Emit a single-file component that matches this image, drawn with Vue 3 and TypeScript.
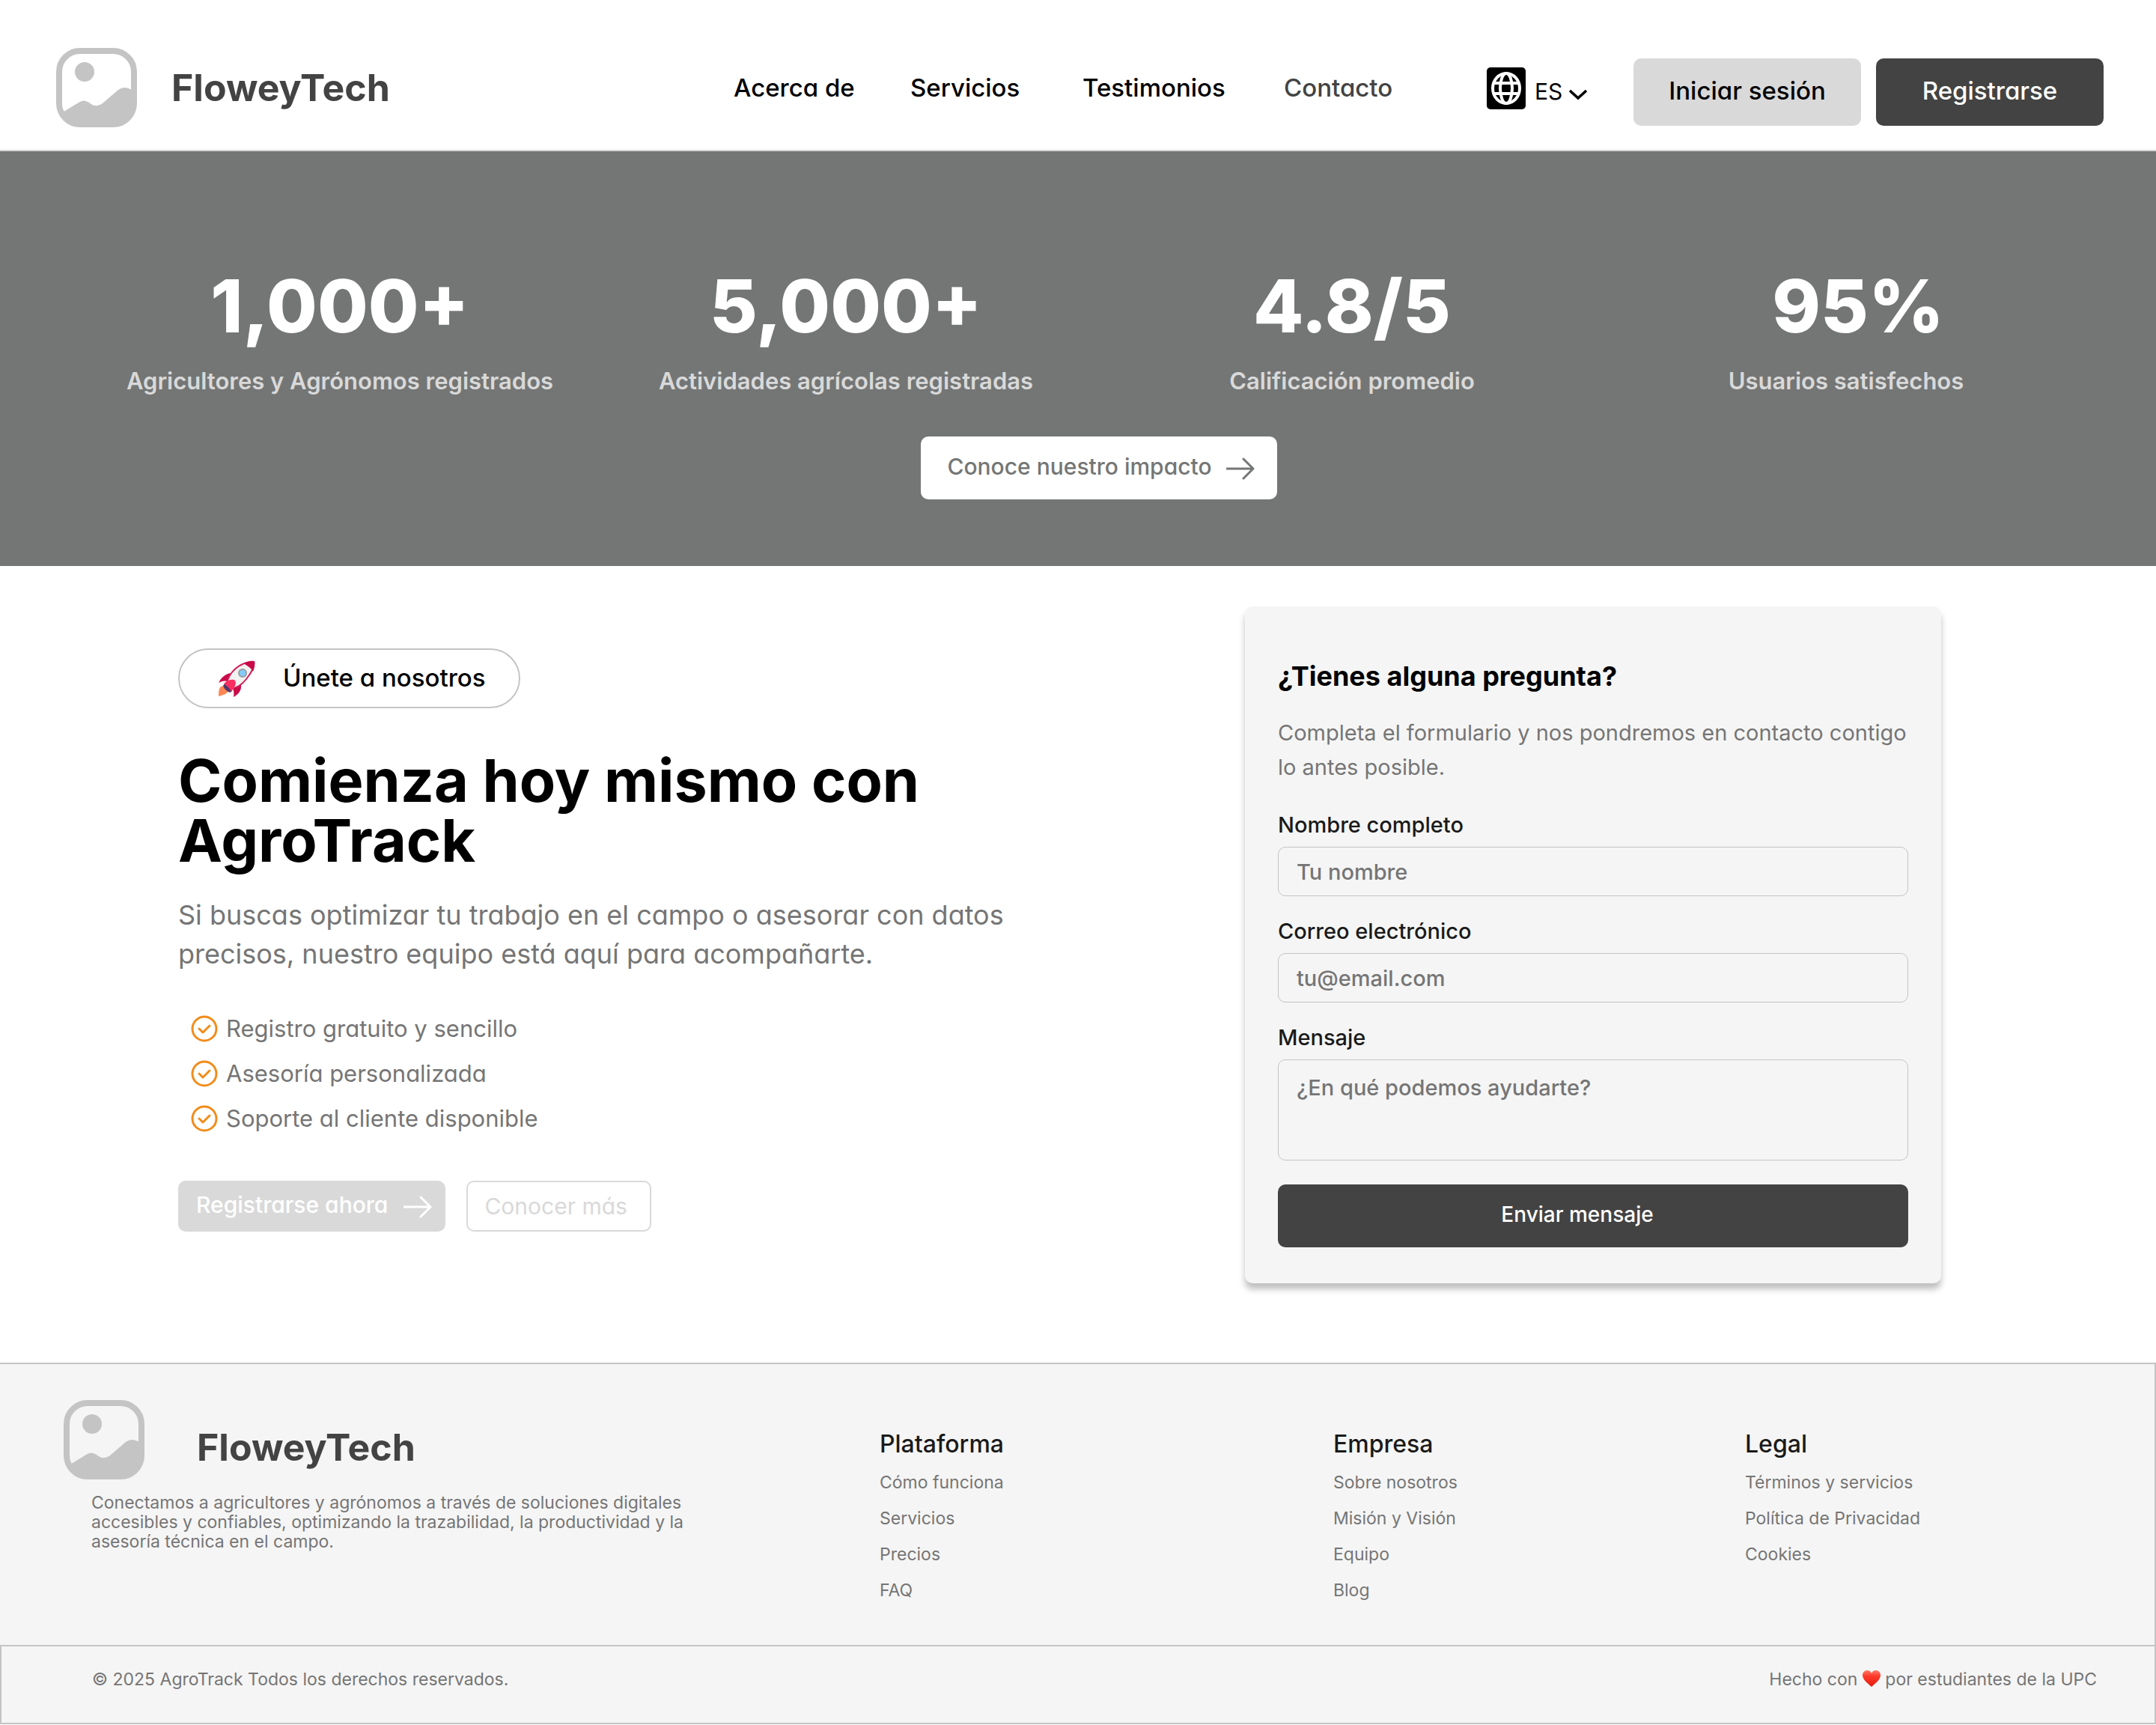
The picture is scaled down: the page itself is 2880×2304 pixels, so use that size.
<script setup lang="ts">
import { ref } from 'vue'

interface Stat {
  value: string
  label: string
}

interface LinkGroup {
  title: string
  links: string[]
}

const navLinks = ['Acerca de', 'Servicios', 'Testimonios', 'Contacto']

const stats: Stat[] = [
  { value: '1,000+', label: 'Agricultores y Agrónomos registrados' },
  { value: '5,000+', label: 'Actividades agrícolas registradas' },
  { value: '4.8/5', label: 'Calificación promedio' },
  { value: '95%', label: 'Usuarios satisfechos' },
]

const benefits = ['Registro gratuito y sencillo', 'Asesoría personalizada', 'Soporte al cliente disponible']

const groups: LinkGroup[] = [
  { title: 'Plataforma', links: ['Cómo funciona', 'Servicios', 'Precios', 'FAQ'] },
  { title: 'Empresa', links: ['Sobre nosotros', 'Misión y Visión', 'Equipo', 'Blog'] },
  { title: 'Legal', links: ['Términos y servicios', 'Política de Privacidad', 'Cookies'] },
]

const language = ref('ES')
const fullName = ref('')
const email = ref('')
const message = ref('')
</script>

<template>
  <div class="page">
    <header class="header round">
      <a class="brand" href="#">
        <svg class="brand-mark" viewBox="0 0 108 106" aria-hidden="true">
          <rect x="4" y="4" width="100" height="98" rx="28" fill="none" stroke="#c4c4c4" stroke-width="8" />
          <circle cx="38" cy="32" r="13" fill="#c4c4c4" />
          <path d="M7 87 L30 73 Q37 68 44 73 Q53 81 62 74 L83 56 Q91 50 101 56 L104 60 L104 74 Q104 102 76 102 L32 102 Q14 102 7 87Z" fill="#c4c4c4" />
        </svg>
        <span class="brand-name">FloweyTech</span>
      </a>
      <nav class="nav" aria-label="Principal">
        <a v-for="link in navLinks" :key="link" href="#" :class="{ active: link === 'Contacto' }">{{ link }}</a>
      </nav>
      <div class="actions">
        <div class="language">
          <svg class="globe" viewBox="0 0 52 56" aria-hidden="true">
            <rect width="52" height="56" rx="5" />
            <g fill="none" stroke="#fff" stroke-width="4">
              <ellipse cx="26" cy="28" rx="18" ry="20" />
              <ellipse cx="26" cy="28" rx="8" ry="20" />
              <path d="M9 21h34M9 35h34" />
            </g>
          </svg>
          <select v-model="language" aria-label="Idioma">
            <option>ES</option>
            <option>EN</option>
          </select>
          <svg class="chevron" viewBox="0 0 26 16" aria-hidden="true">
            <path d="M2 3l11 10L24 3" fill="none" stroke="#000" stroke-width="3.600" />
          </svg>
        </div>
        <button type="button" class="account light">Iniciar sesión</button>
        <button type="button" class="account dark">Registrarse</button>
      </div>
    </header>

    <section class="hero">
      <dl class="stats">
        <div v-for="stat in stats" :key="stat.value" class="stat">
          <dt>{{ stat.label }}</dt>
          <dd>{{ stat.value }}</dd>
        </div>
      </dl>
      <button type="button" class="impact round">
        Conoce nuestro impacto
        <svg class="arrow" viewBox="0 0 38 30" aria-hidden="true">
          <path d="M1 15h35M23 2l13 13-13 13" />
        </svg>
      </button>
    </section>

    <main class="main">
      <section class="intro round">
        <p class="pill">
          <svg class="rocket" viewBox="0 0 50 50" aria-hidden="true">
            <path d="M3 36 C7 32 14 36 14 40 C14 44 8 46 1 48 C1 44 1 39 3 36Z" fill="#ff8754" />
            <path d="M18 17 C9 18 4 24 1 30 C6 27 10 27 14 28Z" fill="#ca0b4a" />
            <path d="M31 32 C32 40 28 45 21 49 C22 44 21 41 20 36Z" fill="#ca0b4a" />
            <path d="M48 2 C36 2 26 7 18 17 C14 23 12 28 12 33 L17 38 C24 37 32 33 38 25 C46 15 49 7 48 2Z" fill="#f2f2f2" stroke="#d51c56" stroke-width="2" stroke-linejoin="round" />
            <path d="M49 1 C43 0 38 2 34 4 C38 6 40 8 43 10 C45 12 46 14 47 15 C49 10 50 5 49 1Z" fill="#ca0b4a" />
            <circle cx="33" cy="17" r="5" fill="#83cbff" stroke="#9b9b9b" stroke-width="2" />
            <path d="M9 31 L19 41 L16 43 Q9 40 7 34Z" fill="#50386b" />
            <path d="M8 31 C12 27 17 25 22 26 C25 29 24 33 22 36 L18 42 L15 37 L11 33Z" fill="#f92f60" />
          </svg>
          Únete a nosotros
        </p>
        <h1>Comienza hoy mismo con AgroTrack</h1>
        <p class="lead">
          Si buscas optimizar tu trabajo en el campo o asesorar con datos precisos, nuestro equipo está aquí para
          acompañarte.
        </p>
        <ul class="benefits">
          <li v-for="benefit in benefits" :key="benefit">
            <svg class="check" viewBox="0 0 36 36" aria-hidden="true">
              <circle cx="18" cy="18" r="16" />
              <path d="M11 18l5 5 9-9" />
            </svg>
            {{ benefit }}
          </li>
        </ul>
        <div class="cta">
          <button type="button" class="cta-fill">
            Registrarse ahora
            <svg class="arrow" viewBox="0 0 38 30" aria-hidden="true">
              <path d="M1 15h35M23 2l13 13-13 13" />
            </svg>
          </button>
          <button type="button" class="cta-line">Conocer más</button>
        </div>
      </section>

      <form class="card" @submit.prevent>
        <h2>¿Tienes alguna pregunta?</h2>
        <p class="hint">Completa el formulario y nos pondremos en contacto contigo lo antes posible.</p>
        <div class="fields">
          <div class="field">
            <label for="full-name">Nombre completo</label>
            <input id="full-name" v-model="fullName" type="text" placeholder="Tu nombre" />
          </div>
          <div class="field">
            <label for="email">Correo electrónico</label>
            <input id="email" v-model="email" type="email" placeholder="tu@email.com" />
          </div>
          <div class="field">
            <label for="message">Mensaje</label>
            <textarea id="message" v-model="message" placeholder="¿En qué podemos ayudarte?"></textarea>
          </div>
        </div>
        <button type="submit" class="send">Enviar mensaje</button>
      </form>
    </main>

    <footer class="footer">
      <div class="footer-top">
        <div class="about">
          <a class="brand" href="#">
            <svg class="brand-mark" viewBox="0 0 108 106" aria-hidden="true">
              <rect x="4" y="4" width="100" height="98" rx="28" fill="none" stroke="#c4c4c4" stroke-width="8" />
              <circle cx="38" cy="32" r="13" fill="#c4c4c4" />
              <path d="M7 87 L30 73 Q37 68 44 73 Q53 81 62 74 L83 56 Q91 50 101 56 L104 60 L104 74 Q104 102 76 102 L32 102 Q14 102 7 87Z" fill="#c4c4c4" />
            </svg>
            <span class="brand-name round">FloweyTech</span>
          </a>
          <p>
            Conectamos a agricultores y agrónomos a través de soluciones digitales accesibles y confiables, optimizando
            la trazabilidad, la productividad y la asesoría técnica en el campo.
          </p>
        </div>
        <nav v-for="group in groups" :key="group.title" class="group" :aria-label="group.title">
          <h3>{{ group.title }}</h3>
          <a v-for="link in group.links" :key="link" href="#">{{ link }}</a>
        </nav>
      </div>
      <div class="footer-bottom">
        <span>© 2025 AgroTrack Todos los derechos reservados.</span>
        <span>
          Hecho con
          <svg class="heart" viewBox="0 0 24 22" role="img" aria-label="amor">
            <defs>
              <linearGradient id="heart-fill" x1="0" y1="0" x2="0" y2="1">
                <stop offset="0" stop-color="#ff7a66" />
                <stop offset="0.35" stop-color="#ff3b2b" />
                <stop offset="1" stop-color="#e01b0c" />
              </linearGradient>
            </defs>
            <path d="M12 22C8 18 0 13 0 6.500C0 2.500 3 0 6.500 0C9 0 11 1.500 12 4C13 1.500 15 0 17.500 0C21 0 24 2.500 24 6.500C24 13 16 18 12 22Z" fill="url(#heart-fill)" />
          </svg>
          por estudiantes de la UPC
        </span>
      </div>
    </footer>
  </div>
</template>

<style>
body {
  margin: 0;
  background: #fff;
}
</style>

<style scoped>
.page {
  font-family: Inter, "Liberation Sans", sans-serif;
  color: #000;
}

.page *,
.page *::before {
  box-sizing: border-box;
}

/* Single-storey "a" for the geometric headings and controls */
.round {
  font-feature-settings: "cv11" 1;
}

h1,
h2,
h3,
p,
ul,
dl,
dd {
  margin: 0;
  padding: 0;
}

a {
  color: inherit;
  text-decoration: none;
}

button,
input,
textarea,
select {
  font: inherit;
  font-feature-settings: inherit;
  color: inherit;
  margin: 0;
}

button {
  border: 0;
  padding: 0;
  cursor: pointer;
}

svg {
  display: block;
  flex: none;
}

.header {
  display: flex;
  align-items: center;
  padding: 64px 70px 30px 75px;
  border-bottom: 2px solid #d9d9d9;
}

.brand {
  display: flex;
  align-items: center;
  gap: 46px;
}

.brand-mark {
  width: 108px;
  height: 106px;
}

.brand-name {
  font-size: 50px;
  line-height: 60px;
  font-weight: 700;
  color: #434343;
}

.nav {
  display: grid;
  grid-template-columns: 236px 230px 269px 271px;
  margin-left: auto;
  font-size: 33px;
  line-height: 40px;
  font-weight: 500;
}

.nav .active {
  color: #434343;
}

.actions {
  display: flex;
  align-items: center;
  gap: 20px;
  padding-top: 12px;
}

.language {
  display: flex;
  align-items: center;
  position: relative;
  width: 176px;
}

.globe {
  width: 52px;
  height: 56px;
  margin-bottom: 10px;
}

.language select {
  appearance: none;
  width: 88px;
  padding: 0 0 2px 12px;
  border: 0;
  background: transparent;
  font-size: 30px;
  line-height: 40px;
}

.chevron {
  position: absolute;
  left: 109px;
  top: 28px;
  width: 26px;
  height: 16px;
  pointer-events: none;
}

.account {
  width: 304px;
  height: 90px;
  padding-bottom: 4px;
  border-radius: 10px;
  font-size: 33px;
  font-weight: 500;
}

.light {
  background: #d9d9d9;
}

.dark {
  background: #434343;
  color: #fff;
}

.hero {
  padding: 158px 60px 89px 116px;
  background: #747675;
  text-align: center;
}

.stats {
  display: grid;
  grid-template-columns: repeat(4, 1fr);
}

.stat {
  display: flex;
  flex-direction: column-reverse;
  gap: 31px;
}

.stat dd {
  font-size: 98px;
  line-height: 98px;
  font-weight: 800;
  color: #fff;
}

.stat dt {
  font-size: 31px;
  line-height: 40px;
  font-weight: 600;
  color: #d9d9d9;
}

.stat:last-child dt {
  padding-right: 32px;
}

.impact {
  display: inline-flex;
  align-items: center;
  gap: 19px;
  height: 84px;
  margin-top: 54px;
  padding: 0 30px 4px 35px;
  border-radius: 10px;
  background: #fff;
  color: #747675;
  font-size: 30px;
  font-weight: 500;
  vertical-align: top;
}

.arrow {
  width: 38px;
  height: 30px;
  margin-top: 6px;
  fill: none;
  stroke: currentColor;
  stroke-width: 3;
  stroke-linecap: round;
  stroke-linejoin: round;
}

.main {
  display: flex;
  justify-content: space-between;
  align-items: flex-start;
  gap: 48px;
  padding: 54px 287px 106px 238px;
}

.intro {
  flex: 0 1 1140px;
  padding-top: 56px;
}

.pill {
  display: inline-flex;
  align-items: center;
  gap: 37px;
  height: 80px;
  padding: 0 44px 2px 51px;
  border: 2px solid #c4c4c4;
  border-radius: 40px;
  font-size: 33px;
  font-weight: 500;
  vertical-align: top;
}

.rocket {
  width: 50px;
  height: 50px;
  margin-top: 4px;
}

h1 {
  margin-top: 56px;
  font-size: 79px;
  line-height: 80px;
  font-weight: 700;
  font-feature-settings: normal;
}

.lead {
  margin-top: 34px;
  font-size: 36px;
  line-height: 52px;
  color: #757575;
}

.benefits {
  margin-top: 44px;
  padding-left: 17px;
  list-style: none;
  font-size: 31px;
  line-height: 60px;
  color: #757575;
}

.benefits li {
  display: flex;
  align-items: center;
  gap: 11px;
}

.check {
  width: 36px;
  height: 36px;
  fill: none;
  stroke: #f28c1a;
  stroke-width: 3;
  stroke-linecap: round;
  stroke-linejoin: round;
}

.cta {
  display: flex;
  gap: 28px;
  margin-top: 53px;
  font-size: 30px;
}

.cta button {
  display: flex;
  align-items: center;
  height: 68px;
  border-radius: 10px;
}

.cta .cta-fill {
  gap: 21px;
  padding: 0 18px 4px 24px;
  background: #d9d9d9;
  color: #fff;
  font-weight: 500;
}

.cta .cta-line {
  padding: 0 30px 0 22px;
  border: 2px solid #d9d9d9;
  background: #fff;
  color: #d9d9d9;
}

.card {
  flex: 0 1 930px;
  padding: 71px 44px 48px;
  border-radius: 10px;
  background: #f5f5f5;
  box-shadow: 0 8px 8px rgba(0, 0, 0, 0.25);
}

h2 {
  font-size: 36px;
  line-height: 44px;
  font-weight: 700;
}

.hint {
  margin-top: 31px;
  margin-right: -16px;
  font-size: 29px;
  line-height: 46px;
  color: #757575;
}

.fields {
  display: flex;
  flex-direction: column;
  gap: 29px;
  margin-top: 36px;
  font-size: 29px;
  line-height: 36px;
  font-weight: 500;
}

.field {
  display: flex;
  flex-direction: column;
  gap: 11px;
}

.field label {
  color: #1a1a1a;
}

.field input,
.field textarea {
  width: 100%;
  height: 66px;
  padding: 0 24px;
  border: 1px solid #c4c4c4;
  border-radius: 10px;
  background: transparent;
  outline: 0;
}

.field textarea {
  display: block;
  height: 135px;
  padding: 19px 24px;
  resize: none;
}

.field ::placeholder {
  color: #757575;
  opacity: 1;
}

.send {
  width: 100%;
  height: 84px;
  margin-top: 32px;
  padding: 0 42px 4px 0;
  border-radius: 10px;
  background: #434343;
  color: #fff;
  font-size: 28px;
  font-weight: 500;
}

.footer {
  border-top: 2px solid #c4c4c4;
  background: #f5f5f5;
  color: #757575;
  font-size: 23px;
}

.footer-top {
  display: grid;
  grid-template-columns: 1090fr 606fr 550fr 547fr;
  padding: 48px 0 49px 85px;
  border-right: 2px solid #c4c4c4;
}

.about .brand {
  gap: 70px;
}

.about .brand-name {
  padding-top: 20px;
}

.about p {
  max-width: 860px;
  margin-top: 18px;
  padding-left: 37px;
  line-height: 26px;
}

.group {
  display: flex;
  flex-direction: column;
  align-items: flex-start;
  padding-top: 39px;
  line-height: 48px;
}

.group h3 {
  margin-bottom: 7px;
  font-size: 32px;
  line-height: 40px;
  font-weight: 500;
  color: #1a1a1a;
}

.footer-bottom {
  display: flex;
  justify-content: space-between;
  padding: 24px 77px 38px 121px;
  border: 2px solid #c4c4c4;
  line-height: 40px;
}

.heart {
  display: inline-block;
  width: 24px;
  height: 22px;
  vertical-align: -2px;
}
</style>
